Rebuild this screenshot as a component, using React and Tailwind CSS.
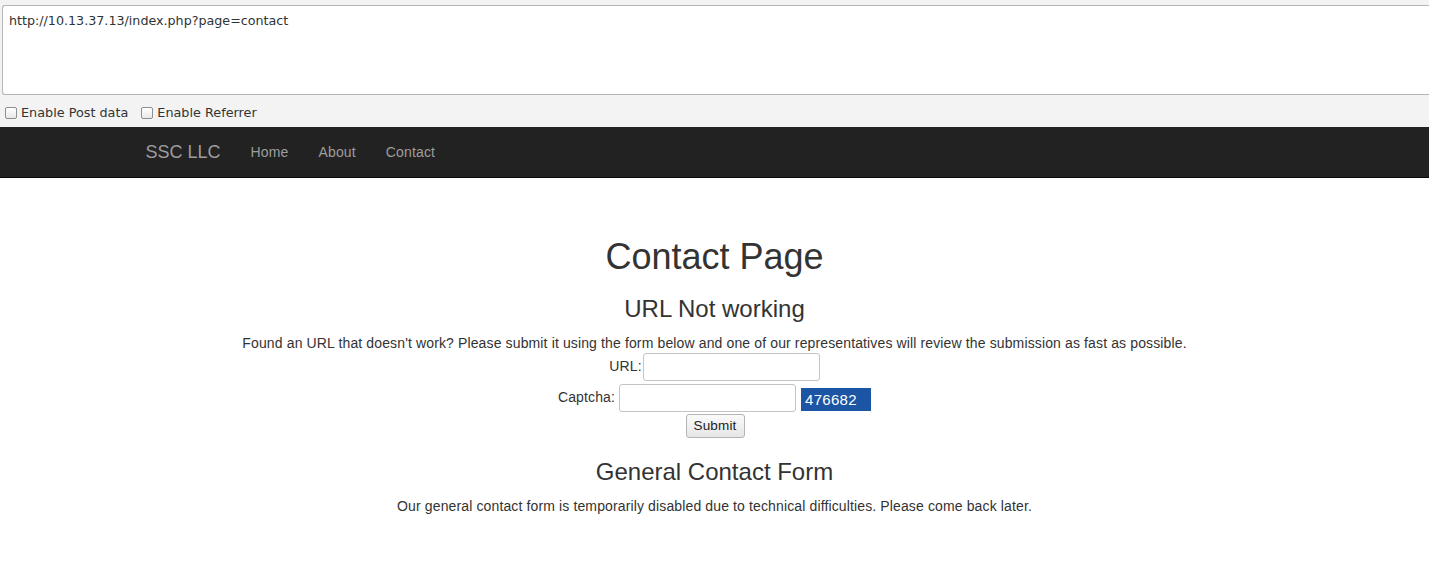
export default function App() {
  return (
    <div className="min-h-screen bg-white text-[#333] font-['Liberation_Sans',Arial,sans-serif]">
      <ToolBar />
      <NavBar />
      <Content />
    </div>
  );
}

/* ================= HACKBAR ================= */

function ToolBar() {
  return (
    <div className="bg-[#f3f3f3] h-[127px] pt-[5px] pl-[2px] font-['DejaVu_Sans',sans-serif] text-[12.7px] text-[#2e3436]">
      <div className="h-[90px] bg-white border border-r-0 border-[#b6b6b6] rounded-l-[3px] px-[6px] pt-[6px] leading-[18px]">
        http://10.13.37.13/index.php?page=contact
      </div>
      <div className="flex items-center h-[22px] mt-[7px] pl-[3px] text-[12.8px] text-[#333]">
        <Check label="Enable Post data" />
        <Check label="Enable Referrer" className="ml-[13px]" />
      </div>
    </div>
  );
}

function Check({ label, className = "" }) {
  return (
    <label className={`flex items-center gap-[4px] ${className}`}>
      <span className="w-[12px] h-[12px] rounded-[2px] border border-[#8f8f8f] bg-gradient-to-b from-white to-[#e8e8e8]" />
      {label}
    </label>
  );
}

/* ================= NAVBAR ================= */

function NavBar() {
  return (
    <div className="bg-[#222] border-b border-[#080808] h-[51px]">
      <div className="w-[1170px] mx-auto flex items-center h-[50px] px-[15px] text-[#9d9d9d]">
        <span className="text-[18px] px-[1px] pr-[15px]">SSC LLC</span>
        {["Home", "About", "Contact"].map((l) => (
          <span key={l} className="text-[14px] tracking-[0.15px] px-[15px] leading-[20px]">
            {l}
          </span>
        ))}
      </div>
    </div>
  );
}

/* ================= PAGE ================= */

function Content() {
  return (
    <div className="text-center pt-[59px] text-[14px] tracking-[0.13px]">
      <h1 className="text-[36px] leading-[1.1] tracking-normal">Contact Page</h1>
      <h3 className="text-[24px] leading-[1.1] tracking-normal mt-[19px]">URL Not working</h3>
      <p className="leading-[20px] mt-[11px]">
        Found an URL that doesn't work? Please submit it using the form below
        and one of our representatives will review the submission as fast as
        possible.
      </p>

      <div className="flex justify-center items-center h-[28px]">
        <span className="mr-[1px]">URL:</span>
        <Field className="w-[177px]" />
      </div>

      <div className="flex justify-center items-end h-[29px] mt-[2px]">
        <span className="mr-[4px] self-center">Captcha:</span>
        <Field className="w-[177px]" />
        <div className="ml-[5px] mb-[1px] w-[70px] h-[23px] bg-[#1b55a3] text-white text-left pl-[4px] text-[15px] tracking-[0.3px] leading-[23px]">
          476682
        </div>
      </div>

      <div className="flex justify-center mt-[2px] pl-[1px]">
        <button className="h-[24px] w-[59px] border border-[#b4b4b4] rounded-[3px] bg-gradient-to-b from-[#fafafa] to-[#e6e6e6] text-[13.5px] text-[#222]">
          Submit
        </button>
      </div>

      <h3 className="text-[24px] leading-[1.1] tracking-normal mt-[21px]">General Contact Form</h3>
      <p className="leading-[20px] mt-[11px]">
        Our general contact form is temporarily disabled due to technical
        difficulties. Please come back later.
      </p>
    </div>
  );
}

function Field({ className = "" }) {
  return (
    <div
      className={`h-[28px] bg-white border border-[#c4c4c4] rounded-[3px] ${className}`}
    />
  );
}
